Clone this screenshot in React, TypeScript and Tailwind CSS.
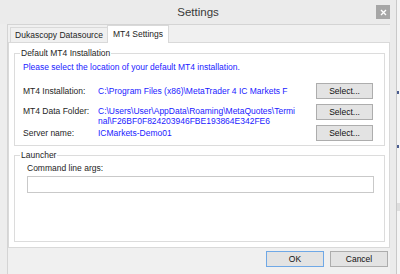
/**
 * SETTINGS DIALOG (Windows 8 style)
 * Janela "Settings" com duas abas, aba MT4 Settings ativa.
 */

// botão cinza padrão do Windows
function WinButton({ label, isDefault = false, className = "" }: { label: string; isDefault?: boolean; className?: string }) {
  return (
    <button
      className={
        "flex items-center justify-center border bg-[#e3e3e3] text-[8.5px] leading-[10px] text-[#111] " +
        (isDefault ? "border-[#6fa8e6]" : "border-[#adadad]") +
        " " +
        className
      }
    >
      {label}
    </button>
  )
}

export default function App() {
  return (
    <div className="flex h-[274px] w-[400px] overflow-hidden bg-[#f5f5f5] font-['Liberation_Sans',Arial,sans-serif] text-[8.5px] leading-[10px] text-[#1e1e1e]">
      {/* JANELA */}
      <div className="flex w-[397px] flex-col border-r border-[#c9c9c9] bg-[#ebebeb]">
        {/* BARRA DE TÍTULO */}
        <div className="relative flex h-[24px] shrink-0 items-center justify-center">
          <span className="text-[11.5px] leading-[14px] text-[#3a3a3a]">Settings</span>
          <button className="absolute right-[6px] top-[5px] flex h-[14px] w-[14px] items-center justify-center bg-[#a6a6a6]">
            <svg width="7" height="7" viewBox="0 0 7 7">
              <path d="M1 1L6 6M6 1L1 6" stroke="#fff" strokeWidth="1.4" />
            </svg>
          </button>
        </div>

        <div className="flex flex-1">
          {/* borda esquerda */}
          <div className="w-[7px] bg-[#ededed]" />

          {/* ÁREA CLIENTE */}
          <div className="flex w-[383px] flex-col border-l border-t border-[#d4d4d4] bg-[#f0f0f0]">
            {/* ABAS */}
            <div className="flex h-[17px] shrink-0 items-end pl-[2px]">
              <div className="flex h-[15px] w-[98px] items-center justify-center border border-b-0 border-[#d9d9d9] bg-[#f0f0f0] whitespace-nowrap">
                Dukascopy Datasource
              </div>
              <div className="relative z-10 -mb-px -ml-px flex h-[18px] w-[62px] items-start justify-center border border-b-0 border-[#d9d9d9] bg-white pt-[3px] whitespace-nowrap">
                MT4 Settings
              </div>
            </div>

            {/* PAINEL DA ABA */}
            <div className="h-[206px] w-[382px] shrink-0 border border-[#d9d9d9] bg-white pl-[5px] pr-[4px]">
              {/* GRUPO: DEFAULT MT4 INSTALLATION */}
              <fieldset className="mt-[5px] border border-[#dcdcdc] pb-[4px] pl-[5px] pr-[11px] pt-[4px]">
                <legend className="px-[1px] leading-[10px]">Default MT4 Installation</legend>
                <div className="pl-[3px]">
                  <div className="text-[#1a1aff]">Please select the location of your default MT4 installation.</div>
                  <div className="mt-[11px] grid grid-cols-[75px_1fr_57px] grid-rows-[16px_16px_16px] items-center gap-y-[5px]">
                    <div>MT4 Installation:</div>
                    <div className="overflow-hidden whitespace-nowrap text-[#1a1aff]">{"C:\\Program Files (x86)\\MetaTrader 4 IC Markets F"}</div>
                    <WinButton label="Select..." className="h-[16px] w-[57px]" />

                    <div className="mt-[2px] self-start">MT4 Data Folder:</div>
                    <div className="mt-[2px] self-start whitespace-nowrap text-[#1a1aff]">
                      {"C:\\Users\\User\\AppData\\Roaming\\MetaQuotes\\Termi"}
                      <br />
                      {"nal\\F26BF0F824203946FBE193864E342FE6"}
                    </div>
                    <WinButton label="Select..." className="h-[16px] w-[57px]" />

                    <div>Server name:</div>
                    <div className="text-[#1a1aff]">ICMarkets-Demo01</div>
                    <WinButton label="Select..." className="h-[16px] w-[57px]" />
                  </div>
                </div>
              </fieldset>

              {/* GRUPO: LAUNCHER */}
              <fieldset className="mt-[4px] h-[92px] border border-[#dcdcdc] pl-[5px] pt-[3px]">
                <legend className="px-[1px] leading-[10px]">Launcher</legend>
                <div className="pl-[7px]">
                  <div>Command line args:</div>
                  <div className="mt-[3px] h-[17px] w-[347px] border border-[#c9c9c9] bg-white" />
                </div>
              </fieldset>
            </div>

            {/* BOTÕES OK / CANCEL */}
            <div className="flex justify-end gap-[6px] pr-[2px] pt-[3px]">
              <WinButton label="OK" isDefault className="h-[16px] w-[58px]" />
              <WinButton label="Cancel" className="h-[16px] w-[58px]" />
            </div>
          </div>

          {/* borda direita */}
          <div className="w-[6px] bg-[#ebebeb]" />
        </div>
      </div>

      {/* APLICATIVO AO FUNDO */}
      <div className="flex flex-1 flex-col">
        <div className="mt-[91px] h-[3px] w-[2px] bg-[#4b5d8f]" />
        <div className="mt-[51px] h-[3px] w-[2px] bg-[#4b5d8f]" />
        <div className="mt-[55px] h-[8px] bg-[#dedede]" />
      </div>
    </div>
  )
}
